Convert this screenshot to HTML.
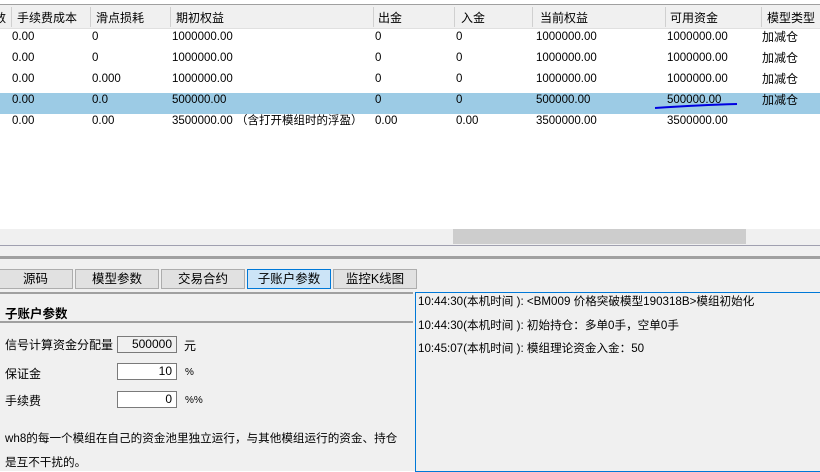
<!DOCTYPE html>
<html><head><meta charset="utf-8"><style>
*{margin:0;padding:0;box-sizing:border-box}
body{width:820px;height:471px;overflow:hidden;background:#fff;font-family:"Liberation Sans","Noto Sans CJK SC","WenQuanYi Zen Hei",sans-serif;font-size:12px;color:#000;position:relative}
.a{position:absolute;white-space:nowrap}
.hdr{position:absolute;left:0;top:4px;width:820px;height:25px;background:#f0f0f0;border-top:1px solid #a0a0a0;border-bottom:1px solid #e0e0e0}
.sep{position:absolute;top:7px;width:1px;height:20px;background:#d0d0d0}
.t{position:absolute;font-size:12px;white-space:nowrap;line-height:16px}
.m{font-size:11.5px}
.hl{position:absolute;left:0;top:93px;width:820px;height:21px;background:#9ccbe5}
.tab{position:absolute;top:269px;height:20px;background:#e1e1e1;border:1px solid #adadad;text-align:center;line-height:18px;font-size:12.5px}
.inp{position:absolute;height:17px;border:1px solid #7a7a7a;background:#fff;text-align:right;padding-right:4px;line-height:15px;font-size:12px}
</style></head><body>
<div class="hdr"></div>
<div class="sep" style="left:11px"></div><div class="sep" style="left:90px"></div><div class="sep" style="left:170px"></div><div class="sep" style="left:373px"></div><div class="sep" style="left:454px"></div><div class="sep" style="left:532px"></div><div class="sep" style="left:665px"></div><div class="sep" style="left:761px"></div>
<div class="t" style="left:-6px;top:10px">数</div>
<div class="t" style="left:17px;top:10px">手续费成本</div>
<div class="t" style="left:96px;top:10px">滑点损耗</div>
<div class="t" style="left:176px;top:10px">期初权益</div>
<div class="t" style="left:378px;top:10px">出金</div>
<div class="t" style="left:461px;top:10px">入金</div>
<div class="t" style="left:540px;top:10px">当前权益</div>
<div class="t" style="left:670px;top:10px">可用资金</div>
<div class="t" style="left:767px;top:10px">模型类型</div>
<div class="hl"></div>
<div class="t m" style="left:12px;top:29px">0.00</div><div class="t m" style="left:92px;top:29px">0</div><div class="t m" style="left:172px;top:29px">1000000.00</div><div class="t m" style="left:375px;top:29px">0</div><div class="t m" style="left:456px;top:29px">0</div><div class="t m" style="left:536px;top:29px">1000000.00</div><div class="t m" style="left:667px;top:29px">1000000.00</div><div class="t" style="left:762px;top:29px">加减仓</div>
<div class="t m" style="left:12px;top:50px">0.00</div><div class="t m" style="left:92px;top:50px">0</div><div class="t m" style="left:172px;top:50px">1000000.00</div><div class="t m" style="left:375px;top:50px">0</div><div class="t m" style="left:456px;top:50px">0</div><div class="t m" style="left:536px;top:50px">1000000.00</div><div class="t m" style="left:667px;top:50px">1000000.00</div><div class="t" style="left:762px;top:50px">加减仓</div>
<div class="t m" style="left:12px;top:71px">0.00</div><div class="t m" style="left:92px;top:71px">0.000</div><div class="t m" style="left:172px;top:71px">1000000.00</div><div class="t m" style="left:375px;top:71px">0</div><div class="t m" style="left:456px;top:71px">0</div><div class="t m" style="left:536px;top:71px">1000000.00</div><div class="t m" style="left:667px;top:71px">1000000.00</div><div class="t" style="left:762px;top:71px">加减仓</div>
<div class="t m" style="left:12px;top:92px">0.00</div><div class="t m" style="left:92px;top:92px">0.0</div><div class="t m" style="left:172px;top:92px">500000.00</div><div class="t m" style="left:375px;top:92px">0</div><div class="t m" style="left:456px;top:92px">0</div><div class="t m" style="left:536px;top:92px">500000.00</div><div class="t m" style="left:667px;top:92px">500000.00</div><div class="t" style="left:762px;top:92px">加减仓</div>
<div class="t m" style="left:12px;top:113px">0.00</div><div class="t m" style="left:92px;top:113px">0.00</div><div class="t m" style="left:172px;top:113px">3500000.00 （含打开模组时的浮盈）</div><div class="t m" style="left:375px;top:113px">0.00</div><div class="t m" style="left:456px;top:113px">0.00</div><div class="t m" style="left:536px;top:113px">3500000.00</div><div class="t m" style="left:667px;top:113px">3500000.00</div>
<svg class="a" style="left:0;top:0" width="820" height="471"><path d="M655 108 Q700 105 737 104" stroke="#0000e0" stroke-width="2" fill="none"/><path d="M165 357 Q190 353 217 354" stroke="#0000e0" stroke-width="2" fill="none"/><path d="M647 363 Q670 361 692 362" stroke="#0000e0" stroke-width="2" fill="none"/></svg>
<div class="a" style="left:0;top:229px;width:820px;height:16px;background:#f0f0f0"></div>
<div class="a" style="left:453px;top:229px;width:293px;height:15px;background:#cdcdcd"></div>
<div class="a" style="left:0;top:245px;width:820px;height:226px;background:#f0f0f0;border-top:1px solid #a0a0b0"></div>
<div class="a" style="left:0;top:256px;width:820px;height:3px;background:#a0a0a0"></div>
<div class="tab" style="left:-2px;width:75px">源码</div>
<div class="tab" style="left:75px;width:84px">模型参数</div>
<div class="tab" style="left:161px;width:84px">交易合约</div>
<div class="tab" style="left:247px;width:84px;background:#cce4f7;border-color:#0078d7">子账户参数</div>
<div class="tab" style="left:333px;width:84px">监控K线图</div>
<div class="a" style="left:0;top:292px;width:413px;height:2px;background:#a0a0a0"></div>
<div class="a" style="left:5px;top:303px;font-weight:bold;font-size:12.5px">子账户参数</div>
<div class="a" style="left:0;top:321px;width:413px;height:2px;background:#a0a0a0"></div>
<div class="a" style="left:5px;top:336px;font-size:12px">信号计算资金分配量</div>
<div class="inp" style="left:117px;top:336px;width:60px;background:#f0f0f0">500000</div>
<div class="a" style="left:184px;top:337px;font-size:12px">元</div>
<div class="a" style="left:5px;top:365px;font-size:12px">保证金</div>
<div class="inp" style="left:117px;top:363px;width:60px">10</div>
<div class="a" style="left:185px;top:367px;font-size:10px">%</div>
<div class="a" style="left:5px;top:392px;font-size:12px">手续费</div>
<div class="inp" style="left:117px;top:391px;width:60px">0</div>
<div class="a" style="left:185px;top:395px;font-size:10px">%%</div>
<div class="a" style="left:5px;top:430px;font-size:11.6px">wh8的每一个模组在自己的资金池里独立运行，与其他模组运行的资金、持仓</div>
<div class="a" style="left:5px;top:454px;font-size:11.6px">是互不干扰的。</div>
<div class="a" style="left:415px;top:292px;width:406px;height:180px;border:1px solid #0078d7;background:#f0f0f0"></div>
<div class="a" style="left:418px;top:293px;font-size:11.6px">10:44:30(本机时间 ): &lt;BM009 价格突破模型190318B&gt;模组初始化</div>
<div class="a" style="left:418px;top:317px;font-size:11.6px">10:44:30(本机时间 ): 初始持仓：多单0手，空单0手</div>
<div class="a" style="left:418px;top:340px;font-size:11.6px">10:45:07(本机时间 ): 模组理论资金入金：50</div>
</body></html>
